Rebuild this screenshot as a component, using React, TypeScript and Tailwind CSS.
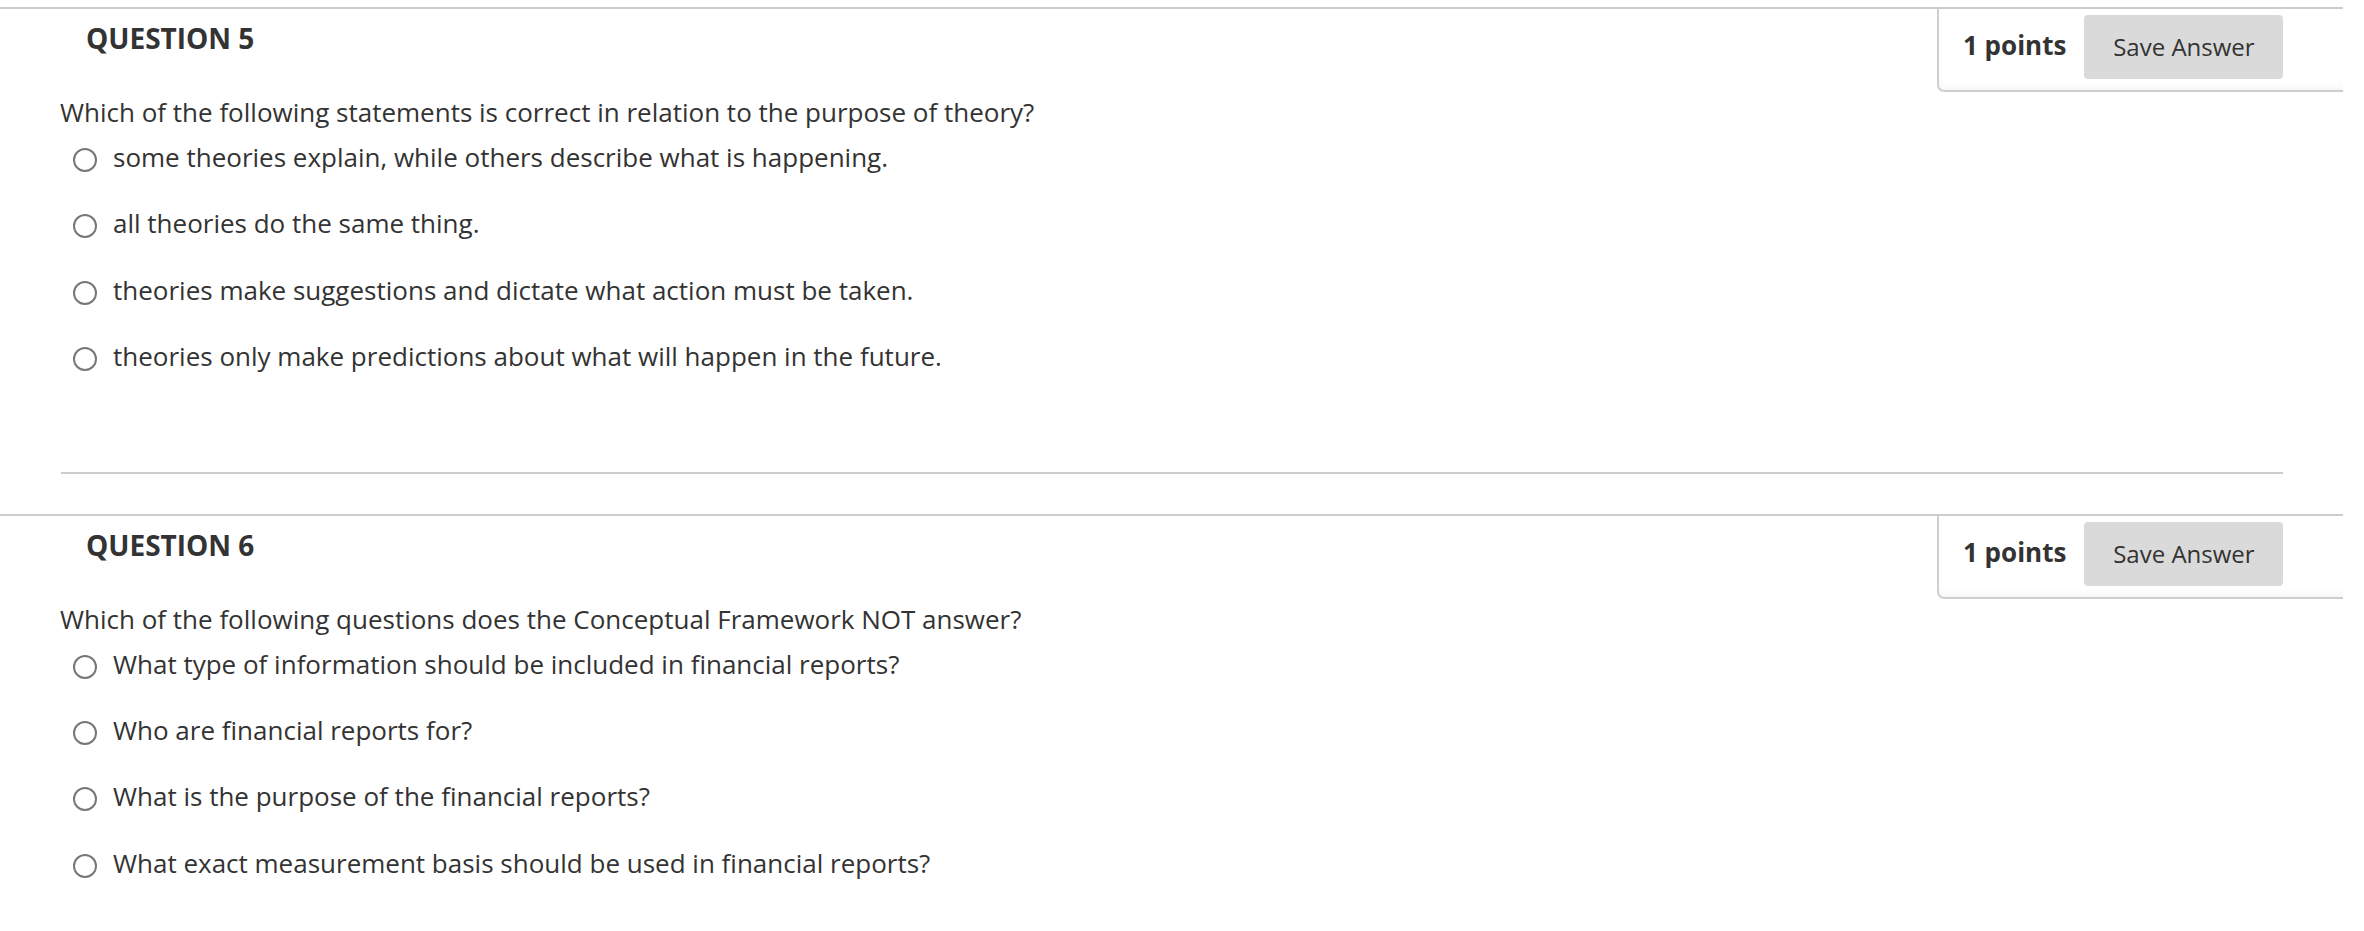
const questions = [
  {
    number: 5,
    text: "Which of the following statements is correct in relation to the purpose of theory?",
    options: [
      "some theories explain, while others describe what is happening.",
      "all theories do the same thing.",
      "theories make suggestions and dictate what action must be taken.",
      "theories only make predictions about what will happen in the future.",
    ],
  },
  {
    number: 6,
    text: "Which of the following questions does the Conceptual Framework NOT answer?",
    options: [
      "What type of information should be included in financial reports?",
      "Who are financial reports for?",
      "What is the purpose of the financial reports?",
      "What exact measurement basis should be used in financial reports?",
    ],
  },
];

function Question({ q, last }: { q: (typeof questions)[number]; last: boolean }) {
  return (
    <div className="border-t-2 border-[#cccccc]">
      {/* header */}
      <div className="flex justify-between">
        <h2 className="pl-[86px] mt-[10px] text-[28px] leading-[38px] font-bold text-[#333333]">
          QUESTION {q.number}
        </h2>
        <div className="flex items-start w-[406px] h-[83px] pl-[24px] pt-[6px] border-l-2 border-b-2 border-[#cfcfcf] rounded-bl-[7px] shadow-[inset_0_-6px_8px_-4px_rgba(0,0,0,0.05)]">
          <span className="mt-[12px] text-[26px] leading-[36px] font-bold text-[#333333]">1 points</span>
          <button className="ml-[18px] w-[199px] h-[64px] rounded-[4px] bg-[#dadada] text-[24px] text-[#333333]">
            Save Answer
          </button>
        </div>
      </div>

      {/* body */}
      <div className="pl-[60px]">
        <p className="mt-[3px] text-[26px] leading-[34px] text-[#333333]">{q.text}</p>
        <div className="mt-[11px] flex flex-col gap-[32.3px]">
          {q.options.map((o) => (
            <label key={o} className="flex items-start pl-[13px] text-[26px] leading-[34px] text-[#333333]">
              <span className="mt-[8px] w-[24px] h-[24px] rounded-full border-2 border-[#777777] bg-white shrink-0" />
              <span className="ml-[16px]">{o}</span>
            </label>
          ))}
        </div>
      </div>

      {!last && (
        <div className="mt-[99px] mb-[40px] ml-[61px] w-[2222px] border-t-2 border-[#cccccc]" />
      )}
    </div>
  );
}

export default function App() {
  return (
    <div className="w-full h-[931px] bg-white overflow-hidden" style={{ fontFamily: '"Open Sans", sans-serif' }}>
      <div className="w-[2343px] pt-[7px]">
        {questions.map((q, i) => (
          <Question key={q.number} q={q} last={i === questions.length - 1} />
        ))}
      </div>
    </div>
  );
}
